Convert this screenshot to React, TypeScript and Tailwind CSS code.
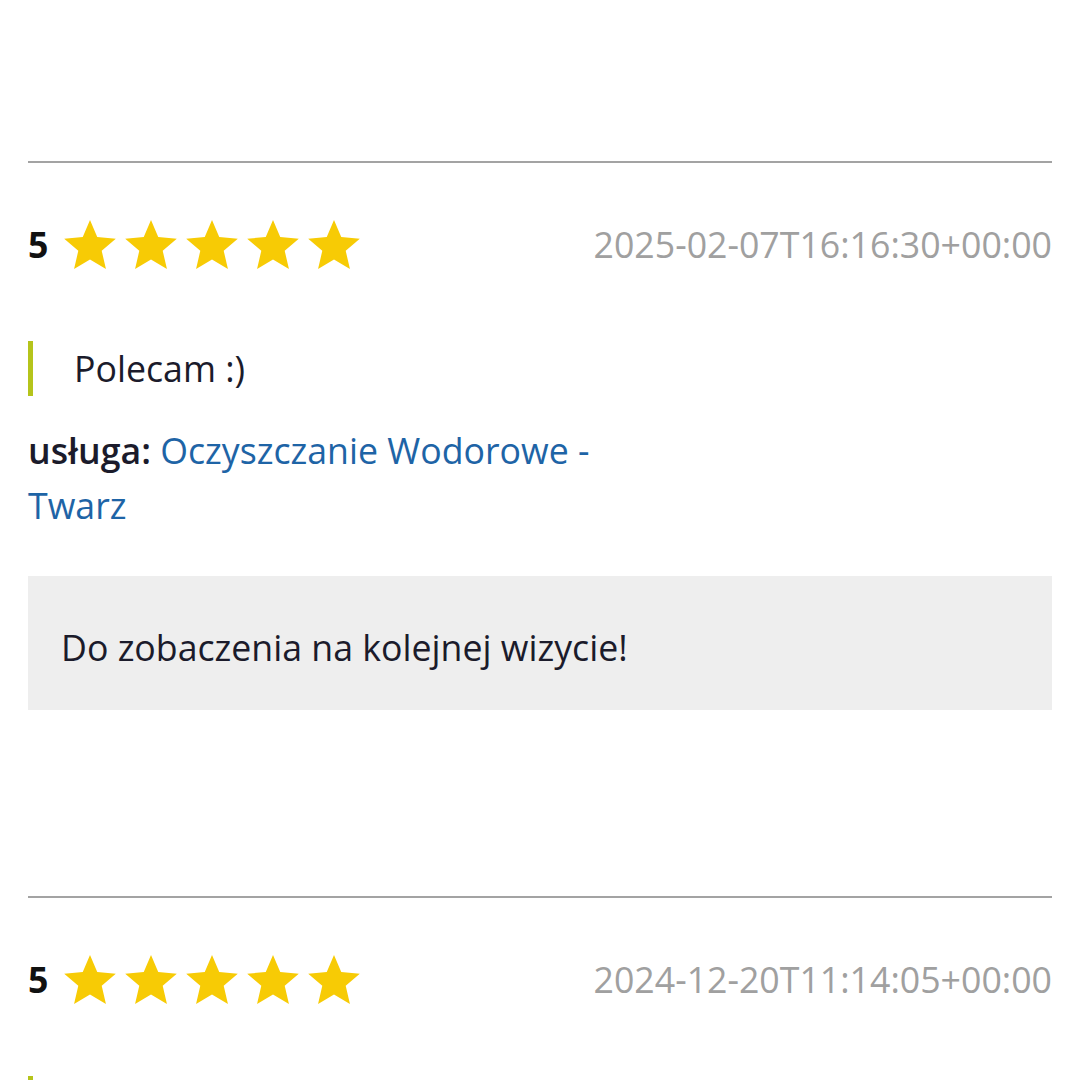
const reviews = [
  {
    rating: 5,
    date: '2025-02-07T16:16:30+00:00',
    text: 'Polecam :)',
    service: 'Oczyszczanie Wodorowe - Twarz',
    reply: 'Do zobaczenia na kolejnej wizycie!',
  },
  {
    rating: 5,
    date: '2024-12-20T11:14:05+00:00',
    text: 'Super',
    service: '',
    reply: '',
  },
]

function Star() {
  return (
    <svg width="52" height="49" viewBox="2 2 20 19" className="shrink-0">
      <path
        fill="#f7cb05"
        d="M12 17.27L18.18 21l-1.64-7.03L22 9.24l-7.19-.61L12 2 9.19 8.63 2 9.24l5.46 4.73L5.82 21z"
      />
    </svg>
  )
}

function Review({ r }: { r: (typeof reviews)[number] }) {
  return (
    <div className="border-t-2 border-[#a3a3a3]">
      {/* rating + date */}
      <div className="mt-[57px] flex items-center justify-between h-[49px]">
        <div className="flex items-center">
          <span className="font-bold text-[#111] mr-[16px]">{r.rating}</span>
          <div className="flex items-center gap-[9px]">
            {Array.from({ length: r.rating }).map((_, i) => (
              <Star key={i} />
            ))}
          </div>
        </div>
        <span className="text-[#a0a0a0]">{r.date}</span>
      </div>

      <blockquote className="mt-[72px] border-l-[5px] border-[#b5c41b] pl-[41px] text-[#1b1b2b]">
        {r.text}
      </blockquote>

      {r.service && (
        <p className="mt-[27px] max-w-[610px]">
          <span className="font-semibold text-[#1b1b2b]">usługa: </span>
          <a className="text-[#1e64a6]">{r.service}</a>
        </p>
      )}

      {r.reply && (
        <div className="mt-[43px] bg-[#eeeeee] pl-[33px] pt-[44px] pb-[35px] text-[#1b1b2b]">
          {r.reply}
        </div>
      )}

      <div className="h-[186px]" />
    </div>
  )
}

export default function App() {
  return (
    <div
      className="min-h-screen bg-white px-[28px] pt-[161px] text-[35.7px] leading-[55px]"
      style={{ fontFamily: '"Open Sans", "Noto Sans", sans-serif' }}
    >
      {reviews.map((r, i) => (
        <Review key={i} r={r} />
      ))}
    </div>
  )
}
